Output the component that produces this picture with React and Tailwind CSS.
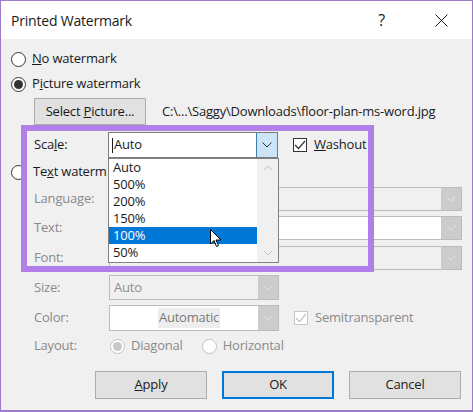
import { useState } from "react";

const chevron = (color) => (
  <svg width="10" height="6" viewBox="0 0 10 6" fill="none">
    <polyline points="0.5,0.5 5,5 9.5,0.5" stroke={color} strokeWidth="1" />
  </svg>
);

function Radio({ checked, disabled }) {
  return (
    <span
      className={`w-[15px] h-[15px] rounded-full border flex items-center justify-center shrink-0 bg-white ${
        disabled ? "border-[#c2c2c2]" : "border-[#333333]"
      }`}
    >
      {checked && (
        <span
          className={`w-[9px] h-[9px] rounded-full ${
            disabled ? "bg-[#c8c8c8]" : "bg-[#333333]"
          }`}
        />
      )}
    </span>
  );
}

function Checkbox({ disabled }) {
  return (
    <span
      className={`w-[14px] h-[14px] border flex items-center justify-center shrink-0 bg-white ${
        disabled ? "border-[#c6c6c6]" : "border-[#333333]"
      }`}
    >
      <svg width="12" height="10" viewBox="0 0 12 10" fill="none">
        <polyline
          points="1,5 4.5,8.5 11,1"
          stroke={disabled ? "#c6c6c6" : "#333333"}
          strokeWidth="1.2"
        />
      </svg>
    </span>
  );
}

// disabled combo box with grey drop button
function Combo({ width, height, bg = "bg-[#f0f0f0]", children }) {
  return (
    <div
      className={`flex border border-[#bcbcbc] ${bg}`}
      style={{ width, height }}
    >
      <div className="flex-1 flex items-center px-[4px] text-[#8d8d8d] overflow-hidden">
        {children}
      </div>
      <div className="w-[20px] bg-[#cccccc] flex items-center justify-center">
        {chevron("#e2e2e2")}
      </div>
    </div>
  );
}

function Button({ children, primary }) {
  return (
    <button
      className={`w-[112px] h-[28px] bg-[#e1e1e1] text-[#1a1a1a] flex items-center justify-center ${
        primary ? "border-2 border-[#0078d7]" : "border border-[#adadad]"
      }`}
    >
      {children}
    </button>
  );
}

export default function App() {
  const [scale] = useState("100%");
  const options = ["Auto", "500%", "200%", "150%", "100%", "50%"];

  return (
    <div
      className="w-[473px] h-[412px] overflow-hidden relative bg-[#f0f0f0] border border-[#9a7cc9] border-b-2 text-[13px] tracking-[-0.2px] text-[#1a1a1a]"
      style={{ fontFamily: "'Open Sans', 'Noto Sans', sans-serif" }}
    >
      {/* title bar */}
      <div className="h-[38px] bg-white flex items-center pl-[10px] pr-[24px]">
        <span className="text-[14px] text-[#1a1a1a] flex-1">Printed Watermark</span>
        <span className="text-[16px] mr-[50px]">?</span>
        <svg width="13" height="13" viewBox="0 0 13 13">
          <path d="M0.5 0.5 L12.5 12.5 M12.5 0.5 L0.5 12.5" stroke="#1a1a1a" strokeWidth="1" />
        </svg>
      </div>

      <div className="pl-[10px] pt-[10px]">
        <div className="h-[20px] flex items-center gap-[6px]">
          <Radio />
          <span>
            <u>N</u>o watermark
          </span>
        </div>
        <div className="h-[20px] mt-[5px] flex items-center gap-[6px]">
          <Radio checked />
          <span>
            P<u>i</u>cture watermark
          </span>
        </div>

        <div className="mt-[4px] ml-[23px] flex items-center gap-[16px]">
          <div className="w-[112px] h-[27px] bg-[#e1e1e1] border border-[#adadad] flex items-center justify-center">
            <span>
              Select <u>P</u>icture...
            </span>
          </div>
          <span>C:\...\Saggy\Downloads\floor-plan-ms-word.jpg</span>
        </div>

        {/* scale */}
        <div className="mt-[7px] ml-[23px] flex items-center">
          <span className="w-[74px]">
            Sca<u>l</u>e:
          </span>
          <div className="w-[170px] h-[26px] flex bg-white border border-[#7a7a7a]">
            <div className="flex-1 flex items-center pl-[3px]">
              <span className="w-px h-[15px] bg-[#1a1a1a] mr-[1px]" />
              Auto
            </div>
            <div className="w-[21px] bg-[#cce4f7] border-l border-[#3c7fb1] flex items-center justify-center">
              {chevron("#333333")}
            </div>
          </div>
          <div className="ml-[15px] flex items-center gap-[7px]">
            <Checkbox />
            <span>
              <u>W</u>ashout
            </span>
          </div>
        </div>

        <div className="h-[20px] mt-[4px] flex items-center gap-[7px]">
          <Radio />
          {/* cut off by the open list */}
          <span className="w-[74px] overflow-hidden whitespace-nowrap">
            Te<u>x</u>t watermark
          </span>
        </div>

        {[
          ["Language:", "mt-[5px]", 24, "bg-[#f0f0f0]"],
          ["Text:", "mt-[5px]", 24, "bg-white"],
          ["Font:", "mt-[6px]", 24, "bg-[#f0f0f0]"],
        ].map(([label, mt, h, bg]) => (
          <div key={label} className={`${mt} ml-[23px] flex items-center text-[#8a8a8a]`}>
            <span className="w-[75px]">{label}</span>
            <Combo width={353} height={h} bg={bg} />
          </div>
        ))}

        <div className="mt-[5px] ml-[23px] flex items-center text-[#8a8a8a]">
          <span className="w-[75px]">Size:</span>
          <Combo width={170} height={25}>
            Auto
          </Combo>
        </div>

        <div className="mt-[5px] ml-[23px] flex items-center text-[#8a8a8a]">
          <span className="w-[75px]">Color:</span>
          <Combo width={170} height={26} bg="bg-white">
            <span className="flex-1 flex justify-center pl-[10px]">
              <span className="bg-[#eeeeee] text-[#7a7a7a] px-px">Automatic</span>
            </span>
          </Combo>
          <div className="ml-[15px] flex items-center gap-[7px]">
            <Checkbox disabled />
            <span>Semitransparent</span>
          </div>
        </div>

        <div className="h-[20px] mt-[5px] ml-[23px] flex items-center text-[#8a8a8a]">
          <span className="w-[76px]">Layout:</span>
          <Radio checked disabled />
          <span className="ml-[6px]">Diagonal</span>
          <span className="ml-[19px]">
            <Radio disabled />
          </span>
          <span className="ml-[6px]">Horizontal</span>
        </div>

        <div className="mt-[15px] ml-[84px] flex gap-[15px]">
          <Button>
            <u>A</u>pply
          </Button>
          <Button primary>OK</Button>
          <Button>Cancel</Button>
        </div>
      </div>

      {/* open scale list */}
      <div className="absolute left-[107px] top-[157px] w-[171px] h-[105px] bg-white border border-[#828282] flex">
        <div className="flex-1 flex flex-col">
          {options.map((o) => (
            <div
              key={o}
              className={`h-[17px] flex items-center pl-[4px] ${
                o === scale ? "bg-[#0078d7] text-white" : ""
              }`}
            >
              {o}
            </div>
          ))}
        </div>
        <div className="w-[21px] bg-[#f0f0f0] flex flex-col justify-between items-center py-[6px]">
          <span className="rotate-180">{chevron("#c0c0c0")}</span>
          {chevron("#c0c0c0")}
        </div>
      </div>

      {/* mouse pointer */}
      <svg
        className="absolute left-[209px] top-[228px]"
        width="12"
        height="19"
        viewBox="0 0 12 19"
      >
        <path
          d="M0.5 0.5 L0.5 15 L4 11.5 L6.5 17.5 L8.5 16.5 L6 11 L11 11 Z"
          fill="white"
          stroke="black"
          strokeWidth="1"
        />
      </svg>

      {/* highlight frame */}
      <div className="absolute left-[20px] top-[124px] w-[353px] h-[147px] border-[6px] border-[#b27fe8] pointer-events-none" />
    </div>
  );
}
